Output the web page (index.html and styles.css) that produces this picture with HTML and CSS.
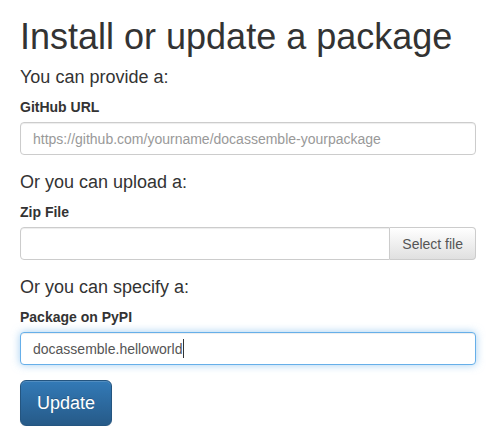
FILE: index.html
```html
<!DOCTYPE html>
<html lang="en">
<head>
<meta charset="utf-8">
<title>Install or update a package</title>
<link rel="stylesheet" href="styles.css">
</head>
<body>
<div class="page">
  <h1 class="title">Install or update a package</h1>
  <form class="form">
    <h4 class="lead-text">You can provide a:</h4>
    <div class="form-group">
      <label class="label" for="gh">GitHub URL</label>
      <input id="gh" class="form-control" type="text" placeholder="https://github.com/yourname/docassemble-yourpackage">
    </div>
    <h4 class="lead-text">Or you can upload a:</h4>
    <div class="form-group">
      <label class="label">Zip File</label>
      <div class="input-group">
        <div class="form-control file-name"></div>
        <span class="btn-file">Select file</span>
      </div>
    </div>
    <h4 class="lead-text">Or you can specify a:</h4>
    <div class="form-group">
      <label class="label">Package on PyPI</label>
      <div class="form-control focused"><span>docassemble.helloworld</span><span class="caret"></span></div>
    </div>
    <button type="button" class="btn-primary">Update</button>
  </form>
</div>
</body>
</html>
```
FILE: styles.css
```css
html, body {
  margin: 0;
  padding: 0;
  background: #fff;
}
body {
  font-family: "Liberation Sans", Arial, sans-serif;
  font-size: 14px;
  line-height: 20px;
  color: #333;
}
.page {
  width: 456px;
  padding: 17px 20px 0 20px;
}
.title {
  margin: 0 0 10px 0;
  font-size: 36px;
  line-height: 40px;
  font-weight: normal;
  color: #333;
}
.form {
  margin: 0;
}
.lead-text {
  margin: 0 0 10px 0;
  font-size: 18px;
  line-height: 20px;
  font-weight: normal;
  color: #333;
}
.form-group {
  margin-bottom: 17px;
}
.label {
  display: block;
  font-weight: bold;
  font-size: 14px;
  line-height: 20px;
  margin-bottom: 5px;
}
.form-control {
  display: block;
  box-sizing: border-box;
  width: 100%;
  height: 33px;
  padding: 6px 12px;
  font-family: "Liberation Sans", Arial, sans-serif;
  font-size: 14px;
  line-height: 20px;
  color: #555;
  background: #fff;
  border: 1px solid #ccc;
  border-radius: 4px;
  box-shadow: inset 0 1px 1px rgba(0,0,0,.075);
  outline: none;
  margin: 0;
}
.form-control::placeholder {
  color: #999;
}
.focused {
  border-color: #66afe9;
  box-shadow: inset 0 1px 1px rgba(0,0,0,.075), 0 0 8px rgba(102,175,233,.6);
  display: flex;
  align-items: center;
}
.caret {
  display: inline-block;
  width: 1px;
  height: 19px;
  background: #333;
  margin-left: 1px;
}
.input-group {
  display: flex;
}
.file-name {
  flex: 1;
  border-radius: 4px 0 0 4px;
}
.btn-file {
  box-sizing: border-box;
  height: 33px;
  padding: 6px 12px;
  font-size: 14px;
  line-height: 20px;
  color: #555;
  border: 1px solid #ccc;
  border-left: none;
  border-radius: 0 4px 4px 0;
  background: linear-gradient(#ffffff, #e0e0e0);
  white-space: nowrap;
}
.btn-primary {
  display: block;
  margin-top: -2px;
  padding: 10px 16px;
  font-family: "Liberation Sans", Arial, sans-serif;
  font-size: 18px;
  line-height: 24px;
  color: #fff;
  background: linear-gradient(#337ab7, #265a88);
  border: 1px solid #245580;
  border-radius: 6px;
  box-shadow: inset 0 1px 0 rgba(255,255,255,.15), 0 1px 1px rgba(0,0,0,.075);
  text-shadow: 0 -1px 0 rgba(0,0,0,.2);
}
```
